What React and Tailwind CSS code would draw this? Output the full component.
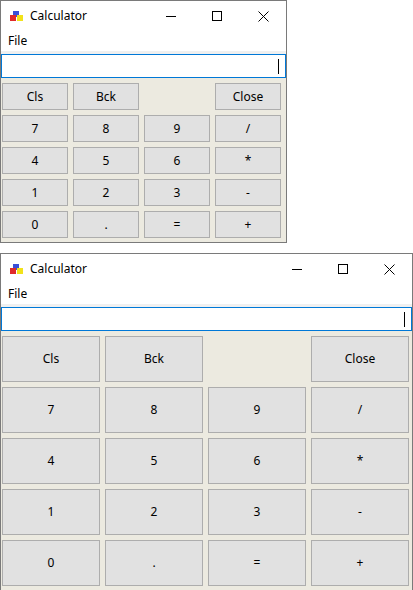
const rows = [
  ["Cls", "Bck", null, "Close"],
  ["7", "8", "9", "/"],
  ["4", "5", "6", "*"],
  ["1", "2", "3", "-"],
  ["0", ".", "=", "+"],
];

const AppIcon = () => (
  <svg width="16" height="16" viewBox="0 0 16 16">
    <rect x="5" y="3" width="6" height="6" fill="#3a4fd8" />
    <rect x="2" y="7" width="6" height="6" fill="#e02a2a" />
    <rect x="9" y="7" width="6" height="6" fill="#f2e21a" />
  </svg>
);

const Window = ({ w, h, btnW, btnH, gapX, gapY }) => (
  <div
    className="flex flex-col border border-[#7a7a7a] bg-white text-[12px] text-black"
    style={{ width: w, height: h }}
  >
    <div className="flex h-[30px] shrink-0 items-center pl-[7px]">
      <AppIcon />
      <span className="ml-[6px]">Calculator</span>
      <div className="ml-auto flex">
        <div className="flex h-[30px] w-[46px] items-center justify-center">
          <div className="h-px w-[10px] bg-black" />
        </div>
        <div className="flex h-[30px] w-[46px] items-center justify-center">
          <div className="h-[10px] w-[10px] border border-black" />
        </div>
        <div className="flex h-[30px] w-[46px] items-center justify-center">
          <svg width="11" height="11" viewBox="0 0 11 11">
            <path d="M0.5 0.5L10.5 10.5M10.5 0.5L0.5 10.5" stroke="#000" strokeWidth="1" />
          </svg>
        </div>
      </div>
    </div>
    <div className="flex h-[20px] shrink-0 items-center pl-[7px]">File</div>
    <div className="flex flex-1 flex-col bg-[#eceae0]">
      <div className="h-[3px] shrink-0 bg-[#f0f0f0]" />
      <div className="flex h-[24px] shrink-0 items-center justify-end border border-[#0078d7] bg-white pr-[6px]">
        <div className="h-[15px] w-px bg-black" />
      </div>
      <div className="flex flex-col pl-px pt-[5px]" style={{ rowGap: gapY }}>
        {rows.map((r, i) => (
          <div key={i} className="flex" style={{ columnGap: gapX }}>
            {r.map((b, j) =>
              b === null ? (
                <div key={j} style={{ width: btnW, height: btnH }} />
              ) : (
                <div
                  key={j}
                  className="flex items-center justify-center border border-[#adadad] bg-[#e1e1e1]"
                  style={{ width: btnW, height: btnH }}
                >
                  {b}
                </div>
              )
            )}
          </div>
        ))}
      </div>
    </div>
  </div>
);

export default function App() {
  return (
    <div
      className="h-[590px] w-[413px] overflow-hidden bg-white"
      style={{ fontFamily: '"Noto Sans", "Open Sans", sans-serif' }}
    >
      <Window w={287} h={243} btnW={66} btnH={27} gapX={5} gapY={5} />
      <div className="h-[10px]" />
      <Window w={413} h={345} btnW={98} btnH={46} gapX={5} gapY={5} />
    </div>
  );
}
